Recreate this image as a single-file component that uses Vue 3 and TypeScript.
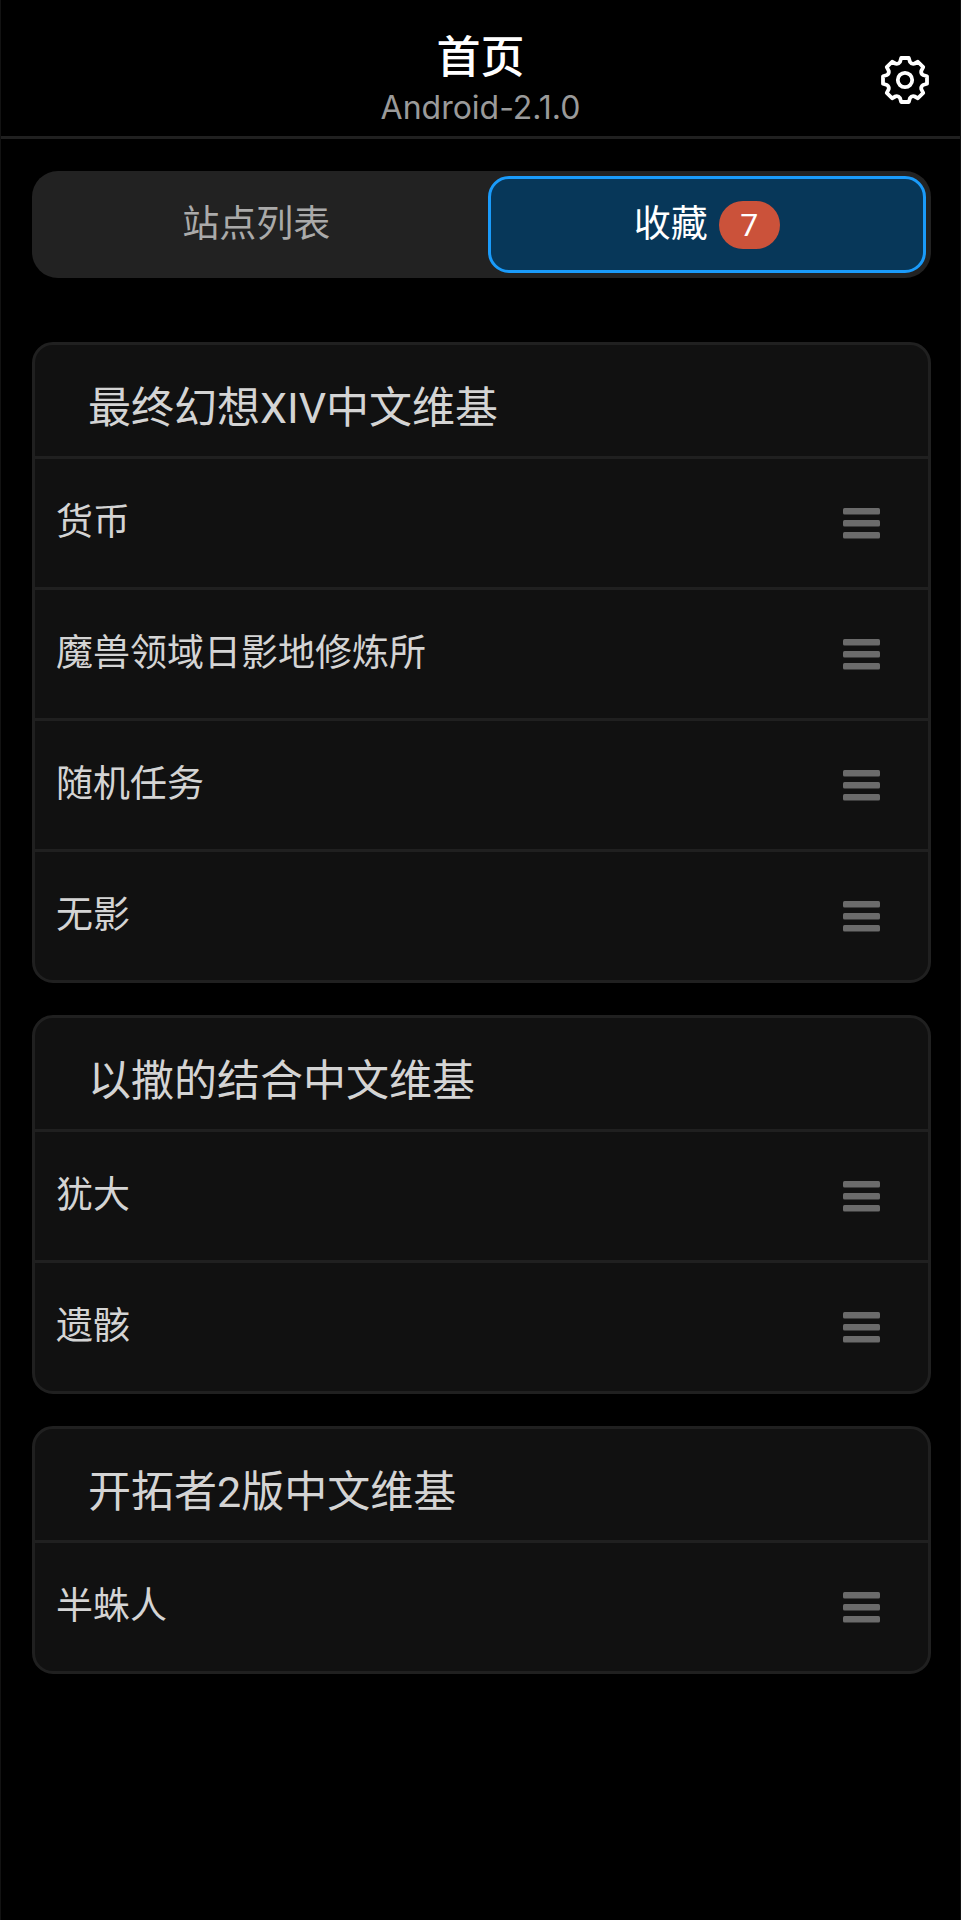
<script setup lang="ts">
import { computed, ref } from 'vue'

interface WikiGroup {
  name: string
  pages: string[]
}

const groups = ref<WikiGroup[]>([
  { name: '最终幻想XIV中文维基', pages: ['货币', '魔兽领域日影地修炼所', '随机任务', '无影'] },
  { name: '以撒的结合中文维基', pages: ['犹大', '遗骸'] },
  { name: '开拓者2版中文维基', pages: ['半蛛人'] },
])

const activeTab = ref<'sites' | 'favorites'>('favorites')
const total = computed(() => groups.value.reduce((sum, g) => sum + g.pages.length, 0))

// Outline of the eight-toothed cog: one tooth repeated every 45 degrees.
const cogPath = (() => {
  const turn = (x: number, y: number, deg: number) => {
    const a = (deg * Math.PI) / 180
    const px = x * Math.cos(a) - y * Math.sin(a)
    const py = x * Math.sin(a) + y * Math.cos(a)
    return `${px.toFixed(2)} ${py.toFixed(2)}`
  }
  let d = `M${turn(-5, -18, 0)}`
  for (let i = 0; i < 8; i++) {
    const t = i * 45
    d += `L${turn(-3.8, -22, t)}L${turn(3.8, -22, t)}L${turn(5, -18, t)}`
    d += `Q${turn(0, -17, t + 22.5)} ${turn(-5, -18, t + 45)}`
  }
  return d + 'Z'
})()
</script>

<template>
  <div class="page">
    <header class="bar">
      <div class="heading">
        <h1>首页</h1>
        <p>Android-2.1.0</p>
      </div>
      <button class="settings" type="button" aria-label="设置">
        <svg viewBox="-24 -24 48 48" aria-hidden="true">
          <path :d="cogPath" />
          <circle r="7.2" />
        </svg>
      </button>
    </header>

    <main>
      <div class="tabs" role="tablist">
        <button
          class="tab"
          :class="{ active: activeTab === 'sites' }"
          type="button"
          role="tab"
          :aria-selected="activeTab === 'sites'"
          @click="activeTab = 'sites'"
        >
          站点列表
        </button>
        <button
          class="tab"
          :class="{ active: activeTab === 'favorites' }"
          type="button"
          role="tab"
          :aria-selected="activeTab === 'favorites'"
          @click="activeTab = 'favorites'"
        >
          收藏 <span class="badge">{{ total }}</span>
        </button>
      </div>

      <div class="groups">
        <section v-for="group in groups" :key="group.name" class="card">
          <h2>{{ group.name }}</h2>
          <ul>
            <li v-for="page in group.pages" :key="page">
              <a href="#">{{ page }}</a>
              <button class="handle" type="button" aria-label="拖动排序">
                <svg viewBox="0 0 37 31" aria-hidden="true">
                  <rect width="37" height="6.5" rx="1.5" />
                  <rect y="12" width="37" height="6.5" rx="1.5" />
                  <rect y="24" width="37" height="6.5" rx="1.5" />
                </svg>
              </button>
            </li>
          </ul>
        </section>
      </div>
    </main>
  </div>
</template>

<style>
html,
body {
  background: #000;
}
</style>

<style scoped>
.page {
  box-sizing: border-box;
  min-height: 100vh;
  border: solid #121212;
  border-width: 0 1px;
  background: #000;
  color: #d4d4d4;
  font-family: Roboto, 'Noto Sans CJK SC', sans-serif;
}

h1,
h2,
p,
ul {
  margin: 0;
  padding: 0;
  font-weight: 400;
}

button {
  margin: 0;
  padding: 0;
  border: 0;
  background: none;
  color: inherit;
  font: inherit;
  cursor: pointer;
}

.bar {
  display: grid;
  grid-template-columns: 1fr auto 1fr;
  align-items: center;
  padding: 30px 31px 6px;
  border-bottom: 3px solid #202020;
}

.heading {
  grid-column: 2;
  text-align: center;
}

h1 {
  color: #fff;
  font-size: 44px;
  font-weight: 500;
  line-height: 56px;
}

.heading p {
  color: #9a9a9a;
  font-family: Inter, sans-serif;
  font-size: 32px;
  line-height: 44px;
}

.settings {
  justify-self: end;
  width: 48px;
  height: 48px;
}

.settings svg {
  display: block;
  width: 100%;
  fill: none;
  stroke: #fff;
  stroke-width: 3.8;
  stroke-linejoin: round;
}

main {
  padding: 32px 29px 32px 31px;
}

.tabs {
  display: grid;
  grid-template-columns: 1fr 1fr;
  gap: 12px;
  padding: 5px;
  border-radius: 26px;
  background: #222;
}

.tab {
  display: flex;
  align-items: center;
  justify-content: center;
  gap: 11px;
  min-height: 97px;
  border: 3px solid transparent;
  border-radius: 21px;
  color: #aaa;
  font-size: 37px;
  line-height: 48px;
}

.tab.active {
  border-color: #1a9bfa;
  background: #073759;
  color: #fff;
}

.badge {
  min-width: 61px;
  border-radius: 24px;
  background: #cb523a;
  font-size: 32px;
  line-height: 48px;
}

.groups {
  display: grid;
  gap: 32px;
  margin-top: 64px;
}

.card {
  border: 3px solid #202020;
  border-radius: 21px;
  background: #111;
  overflow: hidden;
}

h2 {
  padding: 33px 53px 18px;
  font-size: 43px;
  line-height: 60px;
}

ul {
  list-style: none;
}

li {
  display: flex;
  align-items: center;
  min-height: 128px;
  padding: 0 48px 0 21px;
  border-top: 3px solid #202020;
  font-size: 37px;
  line-height: 48px;
}

li a {
  flex: 1;
  color: inherit;
  text-decoration: none;
}

.handle {
  width: 37px;
}

.handle svg {
  display: block;
  width: 100%;
  fill: #6b6b6b;
}
</style>
